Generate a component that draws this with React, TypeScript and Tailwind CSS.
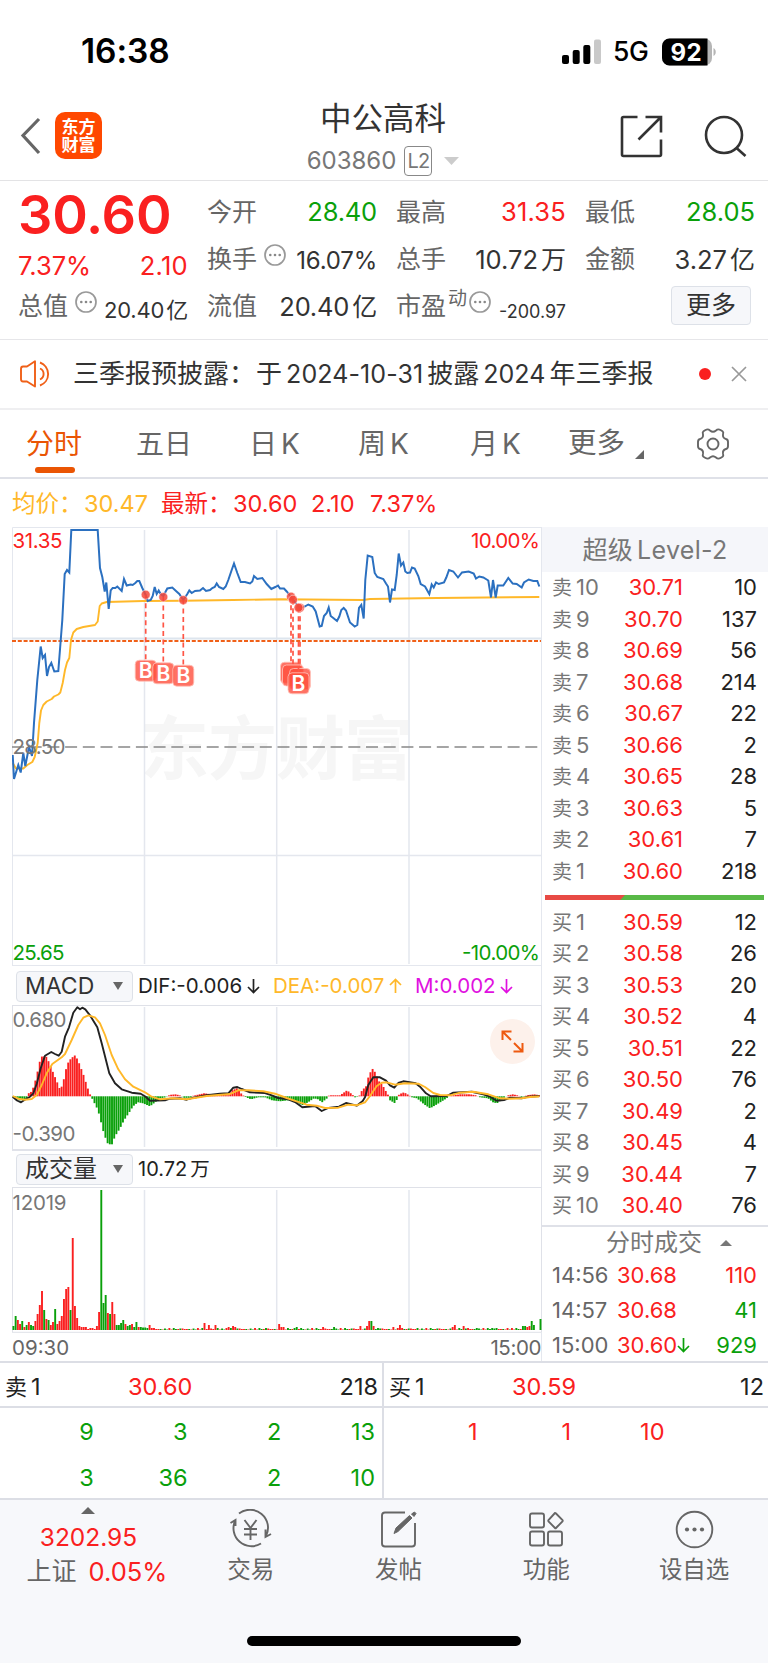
import React from 'react';

type Point = [number, number];

const RED = '#fa2020';
const GREEN = '#0aa00a';

const PRICE = '12.7,755 14,779 18.3,765 20.7,772.5 23.3,753 25.3,766 29,747 32,756 34,723 37.3,680 40.7,646.5 42.7,658 45,655 47,676 49,667 51.3,663 54.3,671.5 58.3,671 62.3,620 64.7,574 67,570 69.3,572.5 71.3,530 97.7,530 100,568 102.3,577 104.7,591.5 106.3,582.5 108.7,609 110.7,590.5 112.7,588 115.3,588 117.3,586.5 121.7,591 124,579 126.7,585.5 130.7,584.5 132.7,585 135.3,583 137.3,581 139.3,581 142.3,588 145.7,595 147.7,601 150.7,600 152.7,596 154.7,587 156.7,594 158.7,590.5 160.7,594 163.3,596 167.3,588.5 172.3,587.5 176,591 179.3,594 183.3,600 187.3,594 189.3,590.5 191.7,593 195,591 200,590.5 203,588 206,591 210,590 212.3,588 214.7,587 216.7,583.5 219,587 223.3,589 225.7,586.5 228.3,580 231.7,570 234,563.5 237.3,573 240.7,582 245,582 250,583.5 252.3,581.5 254,576 257.3,579 262.3,578 266.7,584 271.3,589 275.3,587 278,585.5 280,588.5 284,588.5 286.7,591.5 290.7,596.5 293.3,600 299.3,607.5 304.7,606.5 308.3,604.5 312.7,606.5 315.7,611.5 319.7,626.5 321.7,626 324,616 326.7,613 328.7,607.5 330.7,616 333.3,618 337,621 339.3,616.5 341.3,610 343.7,608 346,610.5 350,622.5 354.7,626.5 357.3,625 359,608 361.3,605 363.7,618.5 365.3,580 367.7,555.5 372.3,557 374.7,573 377.3,577 383.3,579 386,583.5 388,586.5 390,602.5 392,589.5 394.7,590 396.7,575 398.7,553.5 401,565.5 403.3,562.5 405.3,571.5 407.3,573 410,572.5 412,567.5 414.7,568.5 418.3,576 420.7,584 425,586.5 429.3,594 431.7,584.5 433.7,587.5 436,582.5 438.7,584 444,582.5 446.3,577.5 449,570 453.3,571.5 458,577.5 462,572.5 468.7,571.5 473.7,573.5 476,578.5 479.3,576.5 483.3,577.5 488.3,580.5 491,597.5 493,580 495.7,597.5 497.7,585.5 503.3,585.5 508.3,578 512.7,583.5 516.7,584 521.7,587.5 524,582.5 528.7,579.5 533.3,581 537.3,581 539.3,586.5';

const AVERAGE = '12.7,763 16,768.5 23.3,768.5 27.3,765 32.3,762 34.7,757 37.7,743 39.3,723 41,710.5 43.3,705 46.7,701.5 51.7,699 54,696.5 58.3,694.5 60.3,692.5 62.7,683 65,670 67,662.5 69.3,658 71,640 73.3,632.5 76.7,629 83.3,627 95,625 97.7,621.5 99.7,606 101.7,603.5 106.7,602 143.3,601 183,600.7 233,600 280,599.3 363,600 370,599 436.7,598 539.3,597';

const DIF = '12.7,1096.7 17,1100.5 21,1102.3 24,1100.3 30,1096.7 33.3,1093.3 36.7,1084 40.7,1068.3 45,1055.7 51.3,1052 55,1054 58.7,1055.7 61.7,1051.7 65,1036.7 69,1027.3 73.3,1012.7 77.3,1007.3 80,1009.3 82.3,1007.7 85.3,1009.3 90,1015.3 97.3,1027.3 101.7,1043.3 109.3,1073.3 115,1083.3 121.7,1089.3 131.7,1092.7 140.7,1093.7 145.7,1096.7 150,1100.7 165,1100.3 170,1098.7 180,1098.3 186.7,1099.7 193.3,1097.7 206.7,1095.3 220,1093.7 228.3,1093.3 233.3,1087.7 237.3,1087 241.7,1089 250,1092.3 265,1093 271.7,1095.3 278.3,1098 288.3,1099.3 295,1102 302.3,1107.3 315,1106 321.7,1111 328.3,1108 339,1106.7 346,1103 356.7,1105.7 362.7,1101 365,1097.3 368.3,1085 373.3,1077.3 380,1077.3 386,1080.7 390,1085.3 394.3,1087.7 398.3,1083 403.3,1081.3 415.7,1083.3 420,1086.7 426,1093.3 430.7,1096.3 446.7,1096 453.3,1092.7 471.7,1091.7 483.3,1094.3 490,1096.7 496.7,1100.7 504,1100 510,1097.7 521.7,1098.3 528.3,1096.7 539.3,1096';

const DEA = '12.7,1096 18.3,1098.7 25,1099.7 31.7,1099 36.7,1095 41.7,1085 46.7,1073.3 52.3,1064 61.7,1057.3 65,1054 71.7,1040 78.3,1025 83.3,1017.7 88.3,1015.3 95,1017.3 100,1023.3 105,1035 111.7,1055 118.3,1069.3 125,1079.3 133.3,1086.7 145,1092.3 151.7,1096.7 160,1099.3 173.3,1098.3 186.7,1099.3 206.7,1096 230,1094 238.3,1090.3 248.3,1090.3 263.3,1091.3 275,1093.7 286.7,1098 296.7,1101.3 306.7,1104.7 316.7,1105.7 325,1108 338.3,1107.7 348.3,1104.7 356.7,1105.3 365,1102.3 370,1096 376.7,1086 381.7,1082.7 386.7,1082.3 395,1084.7 405,1083.3 418.3,1083.7 425,1087 433.3,1093 440,1095 450,1095.3 460,1092.7 473.3,1091.7 488.3,1094.3 500,1098.3 510,1098.7 521.7,1098.3 530,1097 539.3,1096.5';

// outline of the MACD histogram, positive values go up
const HISTOGRAM: Point[] = [
    [12, 0], [15, -2], [20, -4], [26, -3], [28, 0], [28.5, 3], [32, 5], [36, 18], [40, 36], [42, 40], [46, 40], [49, 34], [53, 24], [58, 12],
    [59.5, 8], [62, 10], [64, 18], [67, 32], [71, 38], [75, 41], [78, 36], [81, 28], [84, 20], [87, 10], [90, 2], [91, 0], [94, -6],
    [98, -14], [101, -26], [104, -38], [108, -48], [112, -48], [115, -40], [120, -32], [124, -24], [128, -18], [133, -10], [138, -6],
    [143, -7], [150, -10], [155, -6], [160, -2], [166, -1], [167, 0], [170, 1.5], [176, 2], [181, 0.5], [184, -1.5], [190, -1.5], [193, 0.5],
    [204, 3], [212, 2], [228, 1], [232, 6], [237, 8], [240, 4], [243, 1], [246, -1], [251, -3], [258, -1], [265, -1], [272, -4], [280, -5],
    [288, -4], [295, -5], [302, -9], [308, -6], [314, -2], [318, -3], [322, -6], [327, -2], [329, 1], [340, 1], [347, 6], [352, 2], [355, -1],
    [359, 0], [362, 6], [366, 10], [369, 22], [373, 28], [376, 22], [379, 15], [382, 12], [387, 3], [389, 0], [390, -4], [395, -7],
    [398, -1], [399, 2], [404, 4], [409, 1], [412, -1], [417, -2], [424, -8], [430, -12], [437, -8], [445, -3], [450, 0.5], [460, 2],
    [470, 2], [476, 1], [480, -1], [488, -2], [493, -6], [497, -7], [503, -2], [508, 1], [513, 2], [519, 0.5], [522, -1], [527, 1], [534, 2], [540, 1],
];

const VOLUME_START = 'g4 g14 r10 r6 g9 r3 g5 r8 g5 g4 r9 r16 r25 r39 g20 r11 g10 r5 r8 g21 r6 r9 r14 r31 r41 r43 g20 r92 r24 r12 r4 r3 r3 r3 r1 r2 r2 r1 r4 r18 g140 g27 g35 r17 g16 r28 r16 g5 g5 g7 g10 r6 g4 g5 r6 g3 g8 r3 g3 g2.5 g2.5 g2 r5 r2 r2'.split(' ');
const VOLUME_SPIKES: Record<number, string> = {
    87: 'r7', 89: 'r5', 92: 'r5', 93: 'g2', 98: 'r3', 100: 'r4', 101: 'r3', 115: 'g2', 121: 'r6', 122: 'r3', 123: 'r3', 128: 'g2', 129: 'g3',
    131: 'g2', 141: 'r3', 146: 'g3', 158: 'r4', 161: 'r4', 162: 'r9', 163: 'g9', 164: 'r4', 166: 'g2', 173: 'r3', 176: 'r5', 177: 'r2',
    184: 'g2', 200: 'r3', 201: 'r5', 205: 'r4', 207: 'r2', 211: 'g2', 218: 'g2', 220: 'g2', 225: 'r2', 229: 'g2', 232: 'g4', 233: 'g4',
    234: 'r3', 235: 'r4', 236: 'g9', 237: 'g5', 238: 'g0', 239: 'g0', 240: 'g11',
};
const QUIET = ['r1', 'g2', 'r0.5', 'g1.5', 'r2', 'r1', 'g1', 'g1.5', 'r1.5', 'r0.5', 'g1', 'r1', 'g0.5'];
const BARS = Array.from({ length: 241 }, (_, i) => i);

const histogramAt = (x: number) => {
    const next = HISTOGRAM.findIndex((p) => p[0] > x);
    const [x0, y0] = HISTOGRAM[next - 1];
    const [x1, y1] = HISTOGRAM[next];
    return y0 + ((y1 - y0) * (x - x0)) / (x1 - x0);
};

const SELL = [
    ['10', '30.71', '10'], ['9', '30.70', '137'], ['8', '30.69', '56'], ['7', '30.68', '214'], ['6', '30.67', '22'],
    ['5', '30.66', '2'], ['4', '30.65', '28'], ['3', '30.63', '5'], ['2', '30.61', '7'], ['1', '30.60', '218'],
];
const BUY = [
    ['1', '30.59', '12'], ['2', '30.58', '26'], ['3', '30.53', '20'], ['4', '30.52', '4'], ['5', '30.51', '22'],
    ['6', '30.50', '76'], ['7', '30.49', '2'], ['8', '30.45', '4'], ['9', '30.44', '7'], ['10', '30.40', '76'],
];

const StatusBar = () => (
    <div className="flex h-[100px] items-center pl-[81px] pr-[51px] pt-[3px] text-black">
        <span className="text-[33.500px] font-semibold leading-none tracking-[-0.1px]">16:38</span>
        <svg className="ml-auto" width="39" height="26" viewBox="0 0 39 26">
            <rect x="0" y="16" width="7" height="9" rx="2" />
            <rect x="10.7" y="11" width="7" height="14" rx="2" />
            <rect x="21.3" y="6" width="7" height="19" rx="2" />
            <rect x="32" y="0.5" width="7" height="24.5" rx="2" fill="#c9c9c9" />
        </svg>
        <span className="ml-3 w-[37px] whitespace-nowrap text-[26.500px] font-medium leading-none tracking-[-0.5px]">5G</span>
        <svg className="ml-3" width="55" height="28" viewBox="0 0 55 28">
            <rect x="0" y="0.5" width="50" height="27" rx="7.5" fill="#b5b5b5" />
            <path d="M7.5 .5H45.5V27.5H7.5A7.5 7.5 0 0 1 0 20V8A7.5 7.5 0 0 1 7.5 .5Z" />
            <path d="M51.5 10c3 1.5 3 6.500 0 8Z" fill="#b5b5b5" />
            <text x="24" y="22.500" textAnchor="middle" fill="#fff" fontSize="24" fontWeight="700" textLength="31">92</text>
        </svg>
    </div>
);

const Header = () => (
    <div className="flex h-[81px] items-center border-b border-[#e3e3e5] pl-5 pr-[21px]">
        <svg className="mt-[-9px]" width="22" height="38" viewBox="0 0 22 38" fill="none" stroke="#666" strokeWidth="3.200">
            <path d="M19 2 3 18.500 19 36" />
        </svg>
        <div className="mt-[-9px] ml-[13px] flex h-[47px] w-[47px] flex-col items-center justify-center rounded-[10px] bg-[#ff4800] text-[17px] font-bold leading-[18px] text-white">
            <span>东方</span>
            <span>财富</span>
        </div>
        <div className="ml-[59px] w-[444px] text-center">
            <div className="mt-[-2px] text-[31.500px] leading-[40px] text-[#333]">中公高科</div>
            <div className="mt-1 flex h-[36px] items-center justify-center text-[24px] text-[#777]">
                <span>603860</span>
                <span className="ml-2 flex h-[30px] w-7 items-center justify-center rounded border border-[#888] text-[20px] tracking-[-1px]">L2</span>
                <svg className="ml-3" width="15" height="8" viewBox="0 0 15 8"><path d="M0 0H15L7.500 8Z" fill="#ccc" /></svg>
            </div>
        </div>
        <svg className="mt-[-8px] ml-auto" width="43" height="43" viewBox="0 0 43 43" fill="none" stroke="#333" strokeWidth="2.600">
            <path d="M17.500 2H3.500Q2 2 2 3.500V39.500Q2 41 3.500 41H39.500Q41 41 41 39.500V24.500M25.500 2H41V17.500M41 2 18.500 24.500" />
        </svg>
        <svg className="mt-[-8px] ml-[41px]" width="43" height="43" viewBox="0 0 43 43" fill="none" stroke="#333" strokeWidth="2.600">
            <circle cx="20" cy="20" r="18" />
            <path d="m32.500 33 9 8" />
        </svg>
    </div>
);

const Dots = ({ className = '' }: { className?: string }) => (
    <svg className={className} width="22" height="22" viewBox="0 0 22 22">
        <circle cx="11" cy="11" r="10" fill="none" stroke="#999" strokeWidth="1.700" />
        <g fill="#888">
            <circle cx="6.300" cy="11" r="1.300" />
            <circle cx="11" cy="11" r="1.300" />
            <circle cx="15.700" cy="11" r="1.300" />
        </g>
    </svg>
);

const Stat = ({ label, value, unit, color = 'text-[#333]' }: { label: string; value: string; unit?: string; color?: string }) => (
    <div className="flex items-center justify-between">
        <span className="text-[25px] text-[#666]">{label}</span>
        <span className={`text-[25.500px] ${color}`}>{value}{unit && <span className="ml-[3px] text-[25px]">{unit}</span>}</span>
    </div>
);

const Quote = () => (
    <div className="flex h-[159px] border-b border-[#e6e6e9] pl-[18px] pt-[7px] leading-none">
        <div className="w-[170px]">
            <div className="flex h-[54px] items-center text-[54px] font-semibold tracking-[-0.2px] text-[#fa2020]">30.60</div>
            <div className="flex h-12 items-center justify-between text-[25.500px] text-[#fa2020]">
                <span>7.37%</span>
                <span className="tracking-[0.3px]">2.10</span>
            </div>
            <div className="flex h-[33px] items-center">
                <span className="text-[25px] text-[#666]">总值</span>
                <Dots className="mb-[10px] ml-[7px]" />
                <span className="ml-auto mt-[6px] whitespace-nowrap text-[22px] tracking-[-0.2px] text-[#333]">20.40<span className="ml-[2px]">亿</span></span>
            </div>
        </div>
        <div className="ml-[19px] grid grid-cols-[170px_170px_170px] grid-rows-[48px_47px_47px] gap-x-[19px]">
            <Stat label="今开" value="28.40" color="text-[#0aa00a] tracking-[-0.2px]" />
            <Stat label="最高" value="31.35" color="text-[#fa2020] tracking-[0.2px]" />
            <Stat label="最低" value="28.05" color="text-[#0aa00a]" />
            <div className="flex items-center">
                <span className="text-[25px] text-[#666]">换手</span>
                <Dots className="mb-[10px] ml-[7px]" />
                <span className="ml-auto mt-[2px] text-[24px] tracking-[-0.2px] text-[#333]">16.07%</span>
            </div>
            <Stat label="总手" value="10.72" unit="万" />
            <Stat label="金额" value="3.27" unit="亿" />
            <Stat label="流值" value="20.40" unit="亿" color="text-[#333] tracking-[-0.2px]" />
            <div className="flex items-center">
                <span className="text-[25px] text-[#666]">市盈</span>
                <span className="mb-4 ml-[2px] text-[19px] text-[#666]">动</span>
                <Dots className="mb-[10px] ml-[2px]" />
                <span className="ml-auto mt-[10px] text-[18px] text-[#333]">-200.97</span>
            </div>
            <div className="flex items-center justify-end pr-1">
                <button className="mt-[-2px] h-[39px] w-20 rounded border border-[#dde1e8] bg-[#f6f7fa] text-[25px] leading-none text-[#333]">更多</button>
            </div>
        </div>
    </div>
);

const News = () => (
    <div className="flex h-[70px] items-center border-b-2 border-[#efeff1] pl-5 pr-[21px]">
        <svg width="33" height="28" viewBox="0 0 33 28" fill="none" stroke="#f06018" strokeWidth="1.900" strokeLinejoin="round">
            <path d="M15 1.200V26.500L7 21.500H3Q1 21.500 1 19V9Q1 6.500 3 6.500H7Z" />
            <path d="M20 8.500a6 6 0 0 1 0 11M20 2.500a12.200 12.200 0 0 1 0 23" />
        </svg>
        <div className="ml-5 whitespace-nowrap text-[26px] leading-none text-[#333]">
            三季报预披露：<span className="ml-[1px]">于</span><span className="mx-1 text-[25px] tracking-[0.1px]">2024-10-31</span>披露<span className="mx-1 text-[25px]">2024</span>年三季报
        </div>
        <div className="ml-auto h-3 w-3 rounded-full bg-[#fa2020]" />
        <svg className="ml-5" width="16" height="16" viewBox="0 0 16 16" stroke="#999" strokeWidth="1.700"><path d="m1 1 14 14M15 1 1 15" /></svg>
    </div>
);

const TABS = [
    { width: 'w-[113px]', cjk: '五日', latin: '' },
    { width: 'w-[109px]', cjk: '日', latin: 'K' },
    { width: 'w-[112px]', cjk: '周', latin: 'K' },
    { width: 'w-[98px]', cjk: '月', latin: 'K' },
];

const Tabs = () => (
    <div className="flex h-[69px] items-center border-b-2 border-[#dfe1e8] pl-[26px] text-[28px] leading-none text-[#666]">
        <div className="relative w-[110px] text-[#ea5504]">
            分时
            <div className="absolute left-[9px] top-[37px] h-[6px] w-10 rounded-[3px] bg-[#ea5504]" />
        </div>
        {TABS.map((tab) => (
            <div key={tab.cjk} className={`flex items-center ${tab.width}`}>
                {tab.cjk}
                <span className="ml-1">{tab.latin}</span>
            </div>
        ))}
        <div className="text-[28.500px]">更多</div>
        <svg className="ml-[10px] mt-[21px]" width="9" height="9" viewBox="0 0 9 9"><path d="M9 0V9H0Z" fill="#666" /></svg>
        <svg className="ml-[52px]" width="34" height="34" viewBox="0 0 34 34" fill="none" stroke="#666" strokeWidth="1.900" strokeLinejoin="round">
            <path d="M14 3.500Q17 6 20 3.500 22 1.500 24.500 3L26.500 4.200Q27.800 5.200 27 7.500 26.500 11 30 12 32 12.500 32 15V19Q32 21.500 30 22 26.500 23 27 26.500 27.800 28.800 26.500 29.800L24.500 31Q22 32.500 20 30.500 17 28 14 30.500 12 32.500 9.500 31L7.500 29.800Q6.200 28.800 7 26.500 7.500 23 4 22 2 21.500 2 19V15Q2 12.500 4 12 7.500 11 7 7.500 6.200 5.200 7.500 4.200L9.500 3Q12 1.500 14 3.500Z" />
            <circle cx="17" cy="17" r="5.500" />
        </svg>
    </div>
);

const BUYS = [
    { x: 145.7, top: 594.7, box: 670.7, letter: 'B' },
    { x: 163.3, top: 597, box: 673.3, letter: 'B' },
    { x: 183.3, top: 600, box: 675.7, letter: 'B' },
    { x: 291, top: 596.7, box: 672.7 },
    { x: 293, top: 599.7, box: 675.5 },
    { x: 300, top: 607.7, box: 679 },
    { x: 298.5, top: 607.7, box: 683.3, letter: 'B' },
];

const PriceChart = () => (
    <svg className="block" width="530" height="439" viewBox="12 527 530 439">
        <g fill="#f6f6f6" fontSize="69" fontWeight="700">
            <text x="140" y="774" textLength="273">东方财富</text>
        </g>
        <g stroke="#e4e7ee" fill="none">
            <path d="M12.500 966V527.500H542M541.500 527V966M12 965.500H542" />
            <path strokeWidth="1.500" d="M144.500 530V964M276.700 530V964M409 530V964M12 855.500H541" />
            <path stroke="#dde5ee" strokeWidth="2" d="M12 638.500H541" />
        </g>
        <path d="M12 747H541" stroke="#888" strokeWidth="1.500" strokeDasharray="12 5.700" />
        <path d="M12 641H541" stroke="#f06018" strokeWidth="2" strokeDasharray="4 1.800" />
        <polyline points={AVERAGE} fill="none" stroke="#ffb829" strokeWidth="1.900" strokeLinejoin="round" />
        <polyline points={PRICE} fill="none" stroke="#2b70c0" strokeWidth="2" />
        {BUYS.map(({ x, top, box, letter }) => (
            <g key={`${x}-${box}`}>
                <path d={`M${x} ${top}V${box - 10}`} stroke="#ff5545" strokeWidth="1.700" strokeDasharray="5 3.500" />
                <circle cx={x} cy={top} r="4.500" fill="#f5483a" fillOpacity="0.85" stroke="#fff" strokeWidth="0.5" />
                <rect x={x - 10.5} y={box - 10.5} width="21" height="21" rx="4" fill="#ff4f3d" fillOpacity="0.8" stroke="#ffc5bd" strokeWidth="0.8" />
                {letter && <text x={x} y={box + 7.5} textAnchor="middle" fontSize="21" fontWeight="600" fill="#fff">{letter}</text>}
            </g>
        ))}
        <g fontSize="20.500">
            <text x="12.500" y="547.500" textLength="50" fill={RED}>31.35</text>
            <text x="471" y="547.500" textLength="69" fill={RED}>10.00%</text>
            <text x="12.500" y="753.500" textLength="53" fill="#777">28.50</text>
            <text x="12.500" y="959.500" textLength="52" fill={GREEN}>25.65</text>
            <text x="462" y="959.500" textLength="78" fill={GREEN}>-10.00%</text>
        </g>
    </svg>
);

const Arrow = ({ up = false, className = '' }: { up?: boolean; className?: string }) => (
    <svg className={className} width="13" height="16" viewBox="0 0 13 16" fill="none" stroke="currentColor" strokeWidth="1.700">
        <path d={up ? 'M6.500 15V2M1 7 6.500 1.500 12 7' : 'M6.500 1V14M1 9 6.500 14.500 12 9'} />
    </svg>
);

const Picker = ({ label, size = 'text-[23px]' }: { label: string; size?: string }) => (
    <button className={`ml-1 flex h-[31px] w-[117px] items-center justify-between rounded-[4px] border border-[#dde1e8] bg-[#f6f7fa] pl-2 pr-[9px] leading-none text-[#333] ${size}`}>
        {label}
        <svg width="10" height="8" viewBox="0 0 10 8"><path d="M0 0H10L5 8Z" fill="#666" /></svg>
    </button>
);

const MacdChart = () => (
    <svg className="block" width="530" height="144" viewBox="12 1005 530 144">
        <path d="M12 1005.500H542M12.500 1005V1149M541.500 1005V1149" stroke="#dfe1e8" fill="none" />
        <path d="M144.500 1007V1147M276.700 1007V1147M409 1007V1147" stroke="#e4e7ee" strokeWidth="1.500" />
        {BARS.map((i) => {
            const v = histogramAt(13.4 + i * 2.19);
            return <rect key={i} x={12.5 + i * 2.19} y={v > 0 ? 1096.3 - v : 1096.3} width="1.900" height={Math.abs(v)} fill={v > 0 ? RED : GREEN} />;
        })}
        <polyline points={DIF} fill="none" stroke="#222" strokeWidth="1.900" strokeLinejoin="round" />
        <polyline points={DEA} fill="none" stroke="#ffb829" strokeWidth="1.900" strokeLinejoin="round" />
        <g fontSize="20.500" fill="#777">
            <text x="12.500" y="1027" textLength="54">0.680</text>
            <text x="12.500" y="1141" textLength="63">-0.390</text>
        </g>
        <circle cx="512.500" cy="1041.500" r="22.500" fill="#fdf1eb" />
        <path d="M502.500 1040V1031.500H511.500M503 1032 511 1040M522.500 1043V1051.500H513.500M522 1051 514 1043" fill="none" stroke="#ee5a10" strokeWidth="2" />
    </svg>
);

const VolumeChart = () => (
    <svg className="block" width="530" height="146" viewBox="12 1187 530 146">
        <path d="M12 1187.500H542M12.500 1187V1332M541.500 1187V1332M12 1332.300H542" stroke="#dfe1e8" fill="none" />
        <path d="M144.500 1190V1330M276.700 1190V1330M409 1190V1330" stroke="#e4e7ee" strokeWidth="1.500" />
        {BARS.map((i) => {
            const bar = VOLUME_START[i] ?? VOLUME_SPIKES[i] ?? QUIET[(i * 5) % QUIET.length];
            const h = Number(bar.slice(1));
            return <rect key={i} x={12.5 + i * 2.196} y={1330 - h} width="1.900" height={h} fill={bar[0] === 'r' ? RED : GREEN} />;
        })}
        <text x="12.500" y="1209.500" fontSize="20.500" textLength="54" fill="#777">12019</text>
    </svg>
);

const Book = ({ side, rows }: { side: string; rows: string[][] }) => (
    <div>
        {rows.map(([level, price, qty]) => (
            <div key={level} className="flex h-[31.500px] items-center pl-[10px] pr-[11px] text-[22px] leading-none">
                <span className="w-[57px] text-[#777]"><span className="text-[20px]">{side}</span><span className="ml-[4px]">{level}</span></span>
                <span className="w-[74px] text-right text-[#fa2020]">{price}</span>
                <span className="ml-auto text-[#222]">{qty}</span>
            </div>
        ))}
    </div>
);

const DEALS = [
    { time: '14:56', price: '30.68', qty: '110', color: 'text-[#fa2020]' },
    { time: '14:57', price: '30.68', qty: '41', color: 'text-[#0aa00a]' },
    { time: '15:00', price: '30.60', qty: '929', color: 'text-[#0aa00a]', down: true },
];

const Level2 = () => (
    <div className="w-[226px] leading-none">
        <div className="flex h-[44.500px] items-center justify-center bg-[#f5f6fa] pt-[2px] text-[25px] tracking-[0.3px] text-[#777]">超级<span className="ml-1">Level-2</span></div>
        <Book side="卖" rows={SELL} />
        <div className="ml-[3px] mt-[8.500px] mb-[6px] flex h-[5px] w-[219px] bg-[#58b947]">
            <div className="h-full w-20 bg-[#e84a45] [clip-path:polygon(0_0,100%_0,94%_100%,0_100%)]" />
        </div>
        <Book side="买" rows={BUY} />
        <div className="mt-1 flex h-[33px] items-center border-t-2 border-[#dfe1e8] pl-[64px] text-[24px] text-[#777]">
            分时成交
            <svg className="ml-[18px]" width="12" height="6" viewBox="0 0 12 6"><path d="M0 6H12L6 0Z" fill="#777" /></svg>
        </div>
        {DEALS.map((deal) => (
            <div key={deal.time} className="flex h-[34.700px] items-center pl-[10px] pr-[11px] text-[22px]">
                <span className="w-[65px] text-[#666]">{deal.time}</span>
                <span className="text-[#fa2020]">{deal.price}</span>
                {deal.down && <Arrow className="text-[#0aa00a]" />}
                <span className={`ml-auto ${deal.color}`}>{deal.qty}</span>
            </div>
        ))}
    </div>
);

const Charts = () => (
    <div className="w-[542px] pl-3">
        <PriceChart />
        <div className="flex h-[39px] items-center border-r border-[#e4e7ee] pt-[1px] text-[20.500px] leading-none">
            <Picker label="MACD" />
            <span className="ml-[5px] w-[109px] text-[#222]">DIF:-0.006</span>
            <Arrow className="text-[#222]" />
            <span className="ml-[13px] w-[116px] text-[#ffb829]">DEA:-0.007</span>
            <Arrow up className="text-[#ffb829]" />
            <span className="ml-[13px] w-[85px] text-[#e010e0]">M:0.002</span>
            <Arrow className="text-[#e010e0]" />
        </div>
        <MacdChart />
        <div className="flex h-[38px] items-center border-r border-t-2 border-[#e0e2e9] text-[20.500px] leading-none">
            <Picker label="成交量" size="text-[24px]" />
            <span className="ml-[5px] text-[20px] text-[#222]">10.72<span className="ml-[3px] text-[19.500px]">万</span></span>
        </div>
        <VolumeChart />
        <div className="flex h-[28px] items-center justify-between border-r border-[#e4e7ee] pt-[3px] text-[20.500px] leading-none text-[#666]">
            <span>09:30</span>
            <span className="tracking-[-0.4px]">15:00</span>
        </div>
    </div>
);

const Best = ({ side, price, qty }: { side: string; price: string; qty: string }) => (
    <div className="flex h-[45px] items-center border-b-2 border-[#dcdee5] pl-[5px] pr-1 pt-[5px] text-[23.500px] text-[#222]">
        <span className="w-[123px]"><span className="text-[22px]">{side}</span><span className="ml-1">1</span></span>
        <span className="text-[#fa2020]">{price}</span>
        <span className="ml-auto">{qty}</span>
    </div>
);

const Queue = () => (
    <div className="grid h-[137px] grid-cols-2 border-t-2 border-[#dcdee5] leading-none">
        <div className="border-r-2 border-[#dcdee5]">
            <Best side="卖" price="30.60" qty="218" />
            <div className="grid w-[375px] grid-cols-4 pt-[1px] text-right text-[23.500px] text-[#0aa00a]">
                {['9', '3', '2', '13', '3', '36', '2', '10'].map((n, i) => <span key={i} className="flex h-[45.500px] items-center justify-end">{n}</span>)}
            </div>
        </div>
        <div>
            <Best side="买" price="30.59" qty="12" />
            <div className="grid w-[374px] grid-cols-4 pt-[1px] text-right text-[23.500px] text-[#fa2020]">
                {['1', '1', '10'].map((n, i) => <span key={i} className="flex h-[45.500px] items-center justify-end">{n}</span>)}
            </div>
        </div>
    </div>
);

const NAV = [
    {
        label: '交易',
        icon: (
            <>
                <path d="M10 4.500A18 18 0 0 1 37 27M32 34.500A18 18 0 0 1 6 12M1.500 14 6.500 11V17M36.500 20.500V28L42 25" />
                <path d="M15.500 11 21.500 19 27.500 11M21.500 19V31M15 20H28M15 25.500H28" />
            </>
        ),
    },
    {
        label: '发帖',
        icon: (
            <>
                <path d="M28 3.500H8Q5 3.500 5 6.500V34.500Q5 37.500 8 37.500H35Q38 37.500 38 34.500V14" />
                <path d="M17 24.500 19 19 32.500 6.500 35 9 21 22.500ZM34.500 5 37 7.500 39 4.500 37.500 3Z" fill="#666" strokeWidth="1" />
            </>
        ),
    },
    {
        label: '功能',
        icon: (
            <>
                <rect x="5" y="4.500" width="14" height="14" rx="2" />
                <rect x="5" y="22.500" width="14" height="14" rx="2" />
                <rect x="23" y="22.500" width="14" height="14" rx="2" />
                <path d="M30 4Q30.500 4 31 4.500L37.500 11Q38 11.700 37.500 12.300L31 19Q30.500 19.500 30 19L23.500 12.300Q23 11.700 23.500 11L29.500 4.500Z" />
            </>
        ),
    },
    {
        label: '设自选',
        icon: (
            <>
                <circle cx="21.500" cy="20.500" r="17.800" />
                <g fill="#666" stroke="none">
                    <circle cx="14" cy="20.500" r="2.100" />
                    <circle cx="21.500" cy="20.500" r="2.100" />
                    <circle cx="29" cy="20.500" r="2.100" />
                </g>
            </>
        ),
    },
];

const Footer = () => (
    <div className="flex h-[165px] flex-col border-t-2 border-[#dcdee5] bg-[#f7f8fb] leading-none">
        <div className="flex h-[136px]">
            <div className="flex w-[177px] flex-col items-center pt-[7px]">
                <svg width="14" height="7" viewBox="0 0 14 7"><path d="M0 7H14L7 0Z" fill="#666" /></svg>
                <div className="mt-[11px] text-[24.500px] text-[#fa2020]">3202.95</div>
                <div className="mt-[9px] flex items-center pl-[17px] text-[25px] text-[#666]">
                    上证<span className="ml-3 text-[25.500px] text-[#fa2020]">0.05%</span>
                </div>
            </div>
            {NAV.map((item) => (
                <div key={item.label} className="flex w-[147.800px] flex-col items-center pt-[9px] text-[23.500px] text-[#666]">
                    <svg width="43" height="41" viewBox="0 0 43 41" fill="none" stroke="#666" strokeWidth="1.900">{item.icon}</svg>
                    <div className="mt-2">{item.label}</div>
                </div>
            ))}
        </div>
        <div className="mx-auto h-[10px] w-[274px] rounded-full bg-black" />
    </div>
);

export default function App() {
    return (
        <div className="w-[768px] overflow-hidden bg-white font-['Inter','Noto_Sans_CJK_SC',sans-serif]">
            <StatusBar />
            <Header />
            <Quote />
            <News />
            <Tabs />
            <div className="flex h-12 items-center pl-3 pt-[2px] text-[23.500px] leading-none">
                <span className="w-[72px] whitespace-nowrap text-[#ffb829]">均价：</span>
                <span className="w-[77px] text-[#ffb829]">30.47</span>
                <span className="w-[72px] whitespace-nowrap text-[#fa2020]">最新：</span>
                <span className="w-[78px] text-[#fa2020]">30.60</span>
                <span className="w-[59px] text-[#fa2020]">2.10</span>
                <span className="text-[#fa2020]">7.37%</span>
            </div>
            <div className="flex h-[834px]">
                <Charts />
                <Level2 />
            </div>
            <Queue />
            <Footer />
        </div>
    );
}
